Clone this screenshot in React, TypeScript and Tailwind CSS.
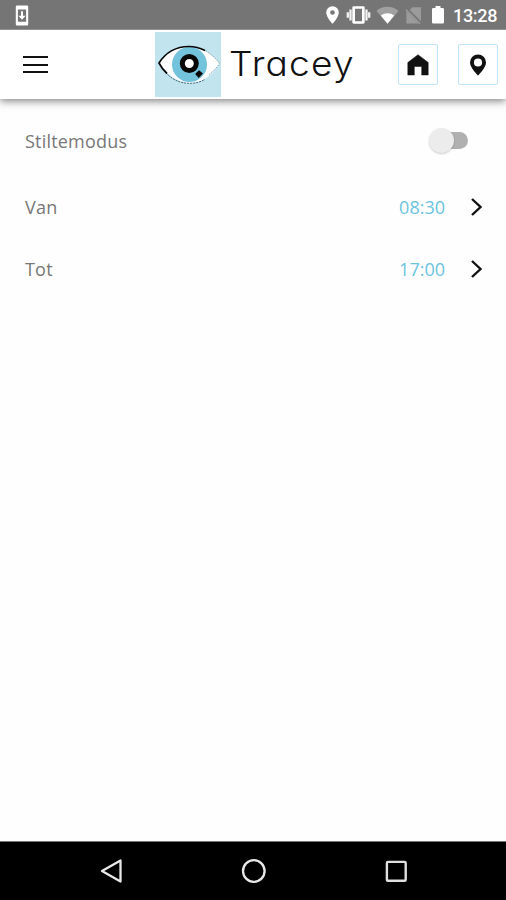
import React from "react";

function StatusBar() {
  return (
    <div className="z-10 flex h-[30px] shrink-0 items-center justify-between border-b border-[#929292] bg-[#757575] pl-[15px] text-white">
      <svg width="14" height="21" viewBox="0 0 14 21" className="mt-px">
        <path fillRule="evenodd" fill="#fff" d="M2 .5h10q1.200 0 1.200 1.200v17.600q0 1.200-1.200 1.200H2q-1.200 0-1.200-1.200V1.700Q.8.5 2 .5ZM2.900 4.500v12.300h8.200V4.500Z" />
        <path fill="#fff" d="M6 6.200h2v4.500h2.600L7 14.700l-3.600-4H6Z" />
      </svg>
      <div className="flex items-center">
        <svg width="126" height="22" viewBox="0 0 126 22" className="mt-px">
          <path fillRule="evenodd" fill="#fff" d="M12.500 2.200a6.300 6.300 0 0 0-6.300 6.300c0 4.800 6.300 11.300 6.300 11.300s6.300-6.500 6.300-11.300a6.300 6.300 0 0 0-6.300-6.300Zm0 4a2.300 2.300 0 1 1 0 4.600 2.300 2.300 0 0 1 0-4.600Z" />
          <path fillRule="evenodd" fill="#fff" d="M33.700 2.300h9.600q1.400 0 1.400 1.400v14.600q0 1.400-1.400 1.400h-9.600q-1.400 0-1.400-1.400V3.700q0-1.400 1.400-1.400ZM35 4.800v12.400h7V4.800Z" />
          <path d="M30.500 5.500v11M46.500 5.500v11M27.800 8.300v5.400M49.200 8.300v5.400" stroke="#f2f2f2" strokeWidth="2.300" />
          <path d="M56.500 6.900a17 17 0 0 1 22 0L67.500 19.800Z" fill="#a0a0a0" />
          <path d="M60.800 11.500a10.700 10.700 0 0 1 13.400 0L67.500 19.800Z" fill="#fff" />
          <path d="M87 8.500 92.500 3.300h8.500v15.500Z" fill="#9b9b9b" />
          <path d="M86.400 5.600v13.900h13.200Z" fill="#9b9b9b" />
          <path d="m85.800 4.300 16 16" stroke="#757575" strokeWidth="3.200" />
          <path d="m86 5.700 14 14" stroke="#9b9b9b" strokeWidth="1.600" />
          <path d="M115.500 2h5v2h2.200q1.300 0 1.300 1.300v13q0 1.300-1.300 1.300h-9.400q-1.300 0-1.300-1.300v-13q0-1.300 1.300-1.300h2.200Z" fill="#fff" />
        </svg>
        <span className="mt-[3px] ml-[7px] w-[53px] font-[Roboto,sans-serif] text-[18px] leading-5 font-medium tracking-[-0.3px]">13:28</span>
      </div>
    </div>
  );
}

function EyeLogo() {
  return (
    <svg width="66" height="65" viewBox="0 0 66 65">
      <path fill="#c2e4ef" d="M0 0h66v65H0z" />
      <path d="M4 31C13 17.500 23 14.500 34 14.500s22 6 30.500 17C56 45 46 51 35 51S13 44 4 31Z" fill="#fff" />
      <circle cx="34.500" cy="32.500" r="17.500" fill="#74c3dd" />
      <path d="M11 41C18 48 25 51.300 35 51.300c6 0 11-1.500 15-4" fill="none" stroke="#315b69" strokeWidth=".9" strokeDasharray="2 1" />
      <path d="M50 18.500c6 3.200 11 8 14.500 13-3 4.500-7 8.500-11 11.500" fill="none" stroke="#708f99" strokeWidth=".7" strokeDasharray="2 1" />
      <path d="M12 41.500Q7 37 4 31C12 18.500 23 14.500 34 14.500q8 0 16 4" fill="none" stroke="#080808" strokeWidth="1.700" />
      <circle cx="34.300" cy="31.500" r="7" fill="#fff" stroke="#080808" strokeWidth="5" />
      <path d="m44 38.300 4 3.300-4.300 4.300-3.600-3.800Z" fill="#080808" />
    </svg>
  );
}

function Header() {
  return (
    <header className="flex h-[69px] shrink-0 items-start bg-white pt-0.5 shadow-[0_2px_8px_rgba(0,0,0,0.5)]">
      <button aria-label="Menu" className="mt-6 ml-[23px] flex h-[17px] w-[25px] flex-col justify-between">
        <span className="h-0.5 w-full bg-[#111]" />
        <span className="h-0.5 w-full bg-[#111]" />
        <span className="h-0.5 w-full bg-[#111]" />
      </button>
      <div className="ml-[107px]"><EyeLogo /></div>
      <span className="ml-[8px] w-[169px] origin-left scale-x-[1.09] pt-[10px] font-[Inter,sans-serif] text-[34px] leading-[44px] font-light tracking-[1.100px] text-[#111] [font-feature-settings:'cv11']">Tracey</span>
      <button aria-label="Home" className="mt-3 flex h-[41px] w-10 shrink-0 items-center justify-center rounded-xs border border-[#c0e4f5]">
        <svg width="22" height="22" viewBox="0 0 22 22">
          <path d="M.8 8.500 11 .7l10.200 7.800V21h-6.500v-8.500H7.300V21H.8Z" fill="#111" stroke="#111" strokeWidth=".5" strokeLinejoin="round" />
        </svg>
      </button>
      <button aria-label="Location" className="mt-3 ml-5 flex h-[41px] w-10 shrink-0 items-center justify-center rounded-xs border border-[#c0e4f5]">
        <svg width="18" height="22" viewBox="0 0 18 22" className="-ml-px">
          <path fillRule="evenodd" fill="#111" d="M9 .5A8 8 0 0 0 1 8.500C1 14 9 21.500 9 21.500S17 14 17 8.500A8 8 0 0 0 9 .5Zm0 3.900a4.100 4.100 0 1 1 0 8.200 4.100 4.100 0 0 1 0-8.200Z" />
        </svg>
      </button>
    </header>
  );
}

function TimeRow({ label, time }: { label: string; time: string }) {
  return (
    <div className="flex h-[62px] items-center pr-[23px] pl-[25px]">
      <span className="flex-1 tracking-[0.2px]">{label}</span>
      <span className="mr-[25px] text-[#6cc4df]">{time}</span>
      <svg width="13" height="20" viewBox="0 0 13 20" fill="none">
        <path d="m2 2 8.500 8L2 18" stroke="#111" strokeWidth="2.400" />
      </svg>
    </div>
  );
}

export default function App() {
  return (
    <div className="flex h-[900px] w-[506px] flex-col bg-[#fefefe] font-['Open_Sans',sans-serif]">
      <StatusBar />
      <Header />
      <main className="flex-1 pt-[7px] text-[18px] text-[#777]">
        <div className="flex h-[70px] items-center justify-between pr-[38px] pl-[25px]">
          <span className="tracking-[0.2px]">Stiltemodus</span>
          <button aria-label="Stiltemodus" className="-mt-0.5 flex h-[26px] w-[39px] items-center">
            <span className="z-10 size-[25px] shrink-0 rounded-full bg-[#ececec] shadow-[0_1px_2px_rgba(0,0,0,0.2)]" />
            <span className="-ml-5 h-[17px] w-[34px] shrink-0 rounded-full bg-[#b0b0b0]" />
          </button>
        </div>
        <TimeRow label="Van" time="08:30" />
        <TimeRow label="Tot" time="17:00" />
      </main>
      <nav className="flex h-[59px] shrink-0 items-center justify-between border-t border-[#777] bg-black pr-[98px] pl-[100px]">
        <svg width="23" height="26" viewBox="0 0 23 26" fill="none"><path d="M20.500 2.500v21L2 13Z" stroke="#e8e8e8" strokeWidth="2.300" strokeLinejoin="round" /></svg>
        <svg width="26" height="26" viewBox="0 0 26 26" fill="none"><circle cx="12.800" cy="13" r="10.800" stroke="#e8e8e8" strokeWidth="2.300" /></svg>
        <svg width="23" height="23" viewBox="0 0 23 23" fill="none"><rect x="1.900" y="1.900" width="18.800" height="18.800" rx="1" stroke="#e0e0e0" strokeWidth="2.400" /></svg>
      </nav>
    </div>
  );
}
